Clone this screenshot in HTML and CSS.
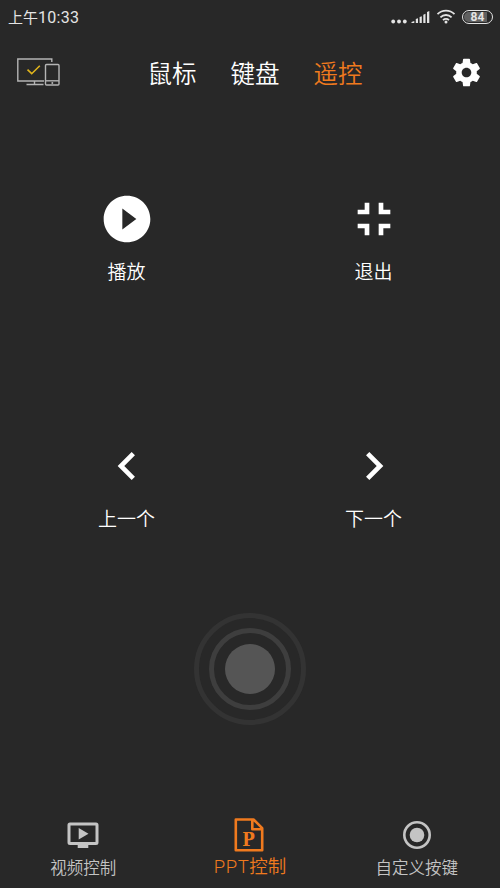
FILE: index.html
```html
<!DOCTYPE html>
<html lang="zh-CN">
<head>
<meta charset="utf-8">
<title>遥控</title>
<link rel="stylesheet" href="styles.css">
</head>
<body>
<div class="status">
  <div class="time">上午<span class="digits">10:33</span></div>
  <div class="indicators">
    <svg class="signal" width="40" height="16" viewBox="0 0 40 16">
      <circle cx="3.200" cy="10.500" r="1.900"/><circle cx="9" cy="10.500" r="1.900"/><circle cx="14.800" cy="10.500" r="1.900"/>
      <path d="M21.500 12v-1l2.800-1v2zM25.800 12v-4l2.200-.8v4.800zM29.600 12v-6l2.200-.8v6.800zM33.300 12v-8.300l2.200-.9v9.200zM37 12v-11l2.300-1v12z"/>
    </svg>
    <svg class="wifi" width="20" height="16" viewBox="0 0 20 16">
      <path d="M1.500 5.200a12 12 0 0 1 17 0M4.400 8.300a8 8 0 0 1 11.200 0M7 11.100a4.400 4.400 0 0 1 6 0"/>
      <circle cx="10" cy="13" r="1.500"/>
    </svg>
    <div class="battery"><span>84</span></div>
  </div>
</div>
<header class="header">
  <svg class="devices" width="44" height="30" viewBox="0 0 44 30">
    <path class="line" d="M35.800 4V1H1.800V23H28M18.500 23v3.500M10.500 26.500h17"/>
    <rect class="line" x="29.500" y="6.500" width="13.500" height="20.500" rx="1"/>
    <path class="line" d="M29.500 22.800h13.500"/><circle class="dot" cx="36.300" cy="25" r="1"/>
    <path class="check" d="M11.500 11.700l4.200 4L23.800 7.700"/>
  </svg>
  <nav class="tabs"><span>鼠标</span><span>键盘</span><span class="active">遥控</span></nav>
  <svg class="gear" width="33" height="33" viewBox="0 0 24 24"><path d="M19.430 12.980c.04-.32.07-.64.07-.98s-.03-.66-.07-.98l2.110-1.650c.19-.15.24-.42.12-.64l-2-3.460c-.12-.22-.39-.3-.61-.22l-2.490 1c-.52-.4-1.080-.73-1.690-.98l-.38-2.650C14.460 2.180 14.250 2 14 2h-4c-.25 0-.46.18-.49.42l-.38 2.650c-.61.25-1.170.59-1.690.98l-2.490-1c-.23-.09-.49 0-.61.22l-2 3.460c-.13.22-.07.49.12.64l2.110 1.650c-.04.32-.07.65-.07.98s.03.66.07.98l-2.110 1.650c-.19.15-.24.42-.12.64l2 3.460c.12.22.39.3.61.22l2.490-1c.52.4 1.080.73 1.690.98l.38 2.650c.03.24.24.42.49.42h4c.25 0 .46-.18.49-.42l.38-2.650c.61-.25 1.170-.59 1.690-.98l2.490 1c.23.09.49 0 .61-.22l2-3.460c.12-.22.07-.49-.12-.64l-2.110-1.650zM12 15.500c-1.930 0-3.500-1.570-3.500-3.500s1.570-3.500 3.500-3.500 3.500 1.570 3.500 3.500-1.570 3.500-3.500 3.500z"/></svg>
</header>
<main class="controls">
  <div class="control"><svg viewBox="0 0 24 24"><path d="M12 2C6.480 2 2 6.480 2 12s4.480 10 10 10 10-4.480 10-10S17.520 2 12 2zm-2 14.500v-9l6 4.500-6 4.500z"/></svg><span>播放</span></div>
  <div class="control"><svg viewBox="0 0 24 24"><path d="M5 16h3v3h2v-5H5v2zm3-8H5v2h5V5H8v3zm6 11h2v-3h3v-2h-5v5zm2-11V5h-2v5h5V8h-3z"/></svg><span>退出</span></div>
  <div class="control"><svg viewBox="0 0 24 24"><path d="M15.410 7.410L14 6l-6 6 6 6 1.410-1.410L10.830 12z"/></svg><span>上一个</span></div>
  <div class="control"><svg viewBox="0 0 24 24"><path d="M10 6L8.590 7.410 13.170 12l-4.580 4.590L10 18l6-6z"/></svg><span>下一个</span></div>
</main>
<div class="pad"><div class="ring"><div class="knob"></div></div></div>
<footer class="bottom">
  <div class="item">
    <svg width="32" height="27" viewBox="0 0 32 27"><path fill-rule="evenodd" d="M3 .5h26a2.500 2.500 0 0 1 2.500 2.500v17.500a2.500 2.500 0 0 1-2.500 2.500h-7.700v3H10.700v-3H3a2.500 2.500 0 0 1-2.500-2.500V3A2.500 2.500 0 0 1 3 .5zM3.500 3.500v16.500h25V3.500zM11.700 6v11.500l9.800-5.750z"/></svg>
    <span>视频控制</span>
  </div>
  <div class="item selected">
    <svg width="30" height="34" viewBox="0 0 30 34"><path class="page" d="M1.800 1.500h17.700l8.700 8.700v22H1.800zM18.300 1.500v9.800h9.900"/><text x="8.200" y="28.300" textLength="12.500" lengthAdjust="spacingAndGlyphs">P</text></svg>
    <span><span class="latin">PPT</span>控制</span>
  </div>
  <div class="item">
    <svg width="30" height="30" viewBox="0 0 30 30"><circle class="orbit" cx="15" cy="15" r="12.700"/><circle cx="15" cy="15" r="7.300"/></svg>
    <span>自定义按键</span>
  </div>
</footer>
</body>
</html>
```
FILE: styles.css
```css
* { box-sizing: border-box; }
body {
  margin: 0;
  width: 500px;
  height: 888px;
  overflow: hidden;
  display: flex;
  flex-direction: column;
  background: #282828;
  color: #fff;
  font-family: "Noto Sans CJK SC", sans-serif;
  font-weight: 350;
}
svg { display: block; fill: currentColor; flex: none; }
.status {
  height: 34px;
  padding: 0 7px 0 8px;
  display: flex;
  align-items: center;
  justify-content: space-between;
  color: #e4e4e4;
}
.time { font-size: 15px; font-weight: 400; line-height: 34px; }
.digits { font-family: Roboto, sans-serif; font-size: 16px; letter-spacing: .3px; }
.indicators { display: flex; align-items: center; }
.signal { margin-top: 4px; }
.wifi { margin: 0 6px 0 6px; }
.wifi path { fill: none; stroke: currentColor; stroke-width: 1.8; }
.battery {
  width: 31px;
  height: 14px;
  padding: 1px;
  border: 1.500px solid #e4e4e4;
  border-radius: 7px;
}
.battery span {
  display: block;
  height: 10px;
  border-radius: 5px;
  background: linear-gradient(90deg, #606060 84%, transparent 84%);
  font: 700 12px/10px Roboto, sans-serif;
  text-align: center;
}
.header {
  height: 77px;
  padding: 0 17px 0 16px;
  display: flex;
  align-items: center;
  justify-content: space-between;
}
.devices .line { fill: none; stroke: #b4b4b4; stroke-width: 1.400; }
.devices .dot { fill: #b4b4b4; }
.devices .check { fill: none; stroke: #e0b41c; stroke-width: 1.600; }
.tabs { display: flex; gap: 34px; font-size: 24.500px; line-height: 36px; }
.active, .selected { color: #f07a1e; }
.controls {
  height: 494px;
  display: grid;
  grid-template-columns: 247px 247px;
  grid-template-rows: 247px 247px;
  padding-left: 3px;
}
.control {
  padding-top: 79.500px;
  display: flex;
  flex-direction: column;
  align-items: center;
  font-size: 19px;
  line-height: 28px;
}
.control svg { width: 56px; height: 56px; margin-bottom: 10.500px; }
.pad {
  width: 112px;
  height: 112px;
  margin: 8px 0 0 194px;
  border: 5px solid #333;
  border-radius: 50%;
  display: grid;
  place-items: center;
}
.ring {
  width: 82px;
  height: 82px;
  border: 5px solid #3e3e3e;
  border-radius: 50%;
  display: grid;
  place-items: center;
}
.knob { width: 50px; height: 50px; border-radius: 50%; background: #555; }
.bottom {
  height: 73px;
  margin-top: auto;
  display: grid;
  grid-template-columns: repeat(3, 1fr);
  color: #c4c4c4;
}
.item {
  padding-bottom: 9px;
  display: flex;
  flex-direction: column;
  align-items: center;
  justify-content: space-between;
  font-size: 16.500px;
  line-height: 24px;
}
.item svg { margin: auto 0; }
.item.selected { color: #f07a1e; font-size: 18.500px; padding-bottom: 9px; }
.selected svg { position: relative; top: .5px; left: -.5px; }
.latin { font-family: Roboto, sans-serif; letter-spacing: .6px; }
.page { fill: none; stroke: currentColor; stroke-width: 2.600; stroke-linejoin: round; }
.selected text { font: 700 19px "DejaVu Serif", serif; }
.orbit { fill: none; stroke: currentColor; stroke-width: 2.600; }
```
